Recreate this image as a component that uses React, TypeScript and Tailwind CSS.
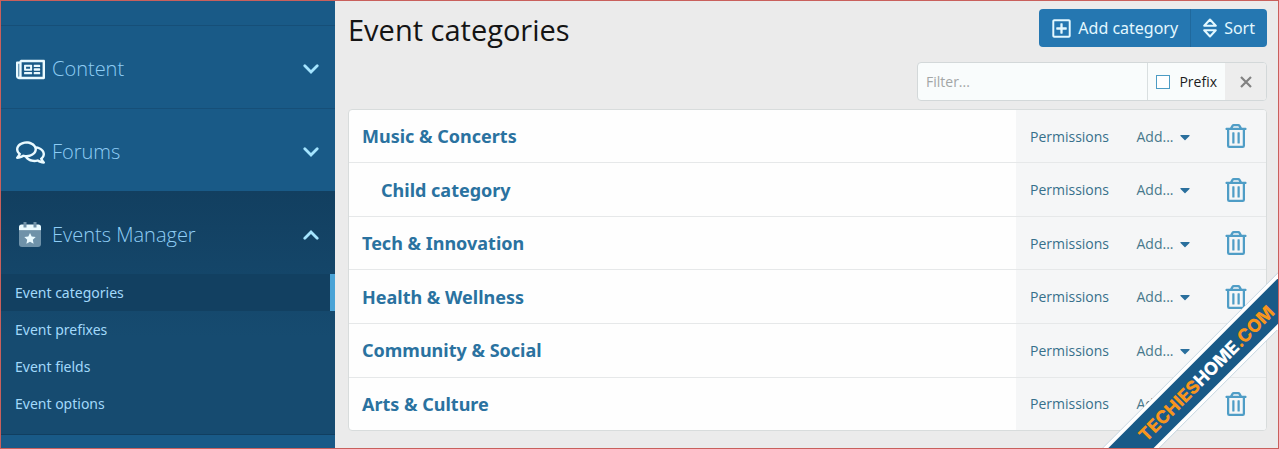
import { useState } from "react";
import type { ReactNode } from "react";
import { FaCaretDown, FaRegComments, FaRegNewspaper, FaRegPlusSquare, FaRegTrashAlt } from "react-icons/fa";

type Category = {
  title: string;
  depth: number;
};

const categories: Category[] = [
  { title: "Music & Concerts", depth: 0 },
  { title: "Child category", depth: 1 },
  { title: "Tech & Innovation", depth: 0 },
  { title: "Health & Wellness", depth: 0 },
  { title: "Community & Social", depth: 0 },
  { title: "Arts & Culture", depth: 0 },
];

const eventLinks = ["Event categories", "Event prefixes", "Event fields", "Event options"];

export default function App() {
  const [filter, setFilter] = useState("");
  const [prefix, setPrefix] = useState(false);

  return (
    <div className="relative flex min-h-screen overflow-hidden border border-[#c9605c] bg-[#ebebeb] font-['Open_Sans','Noto_Sans',sans-serif]">
      <Sidebar />

      <main className="min-w-0 flex-1 pr-[11px] pl-[13px]">
        <div className="flex items-start justify-between pt-2">
          <h1 className="text-[29px] leading-[42px] text-[#141414]">Event categories</h1>
          <div className="flex h-[38px] overflow-hidden rounded-[4px] bg-[#2577b1] font-['Noto_Sans',sans-serif] text-base text-[#e3f8ff]">
            <button type="button" className="flex items-center gap-[6px] border-r border-[#20699d] px-3">
              <FaRegPlusSquare className="size-[21px]" />
              Add category
            </button>
            <button type="button" className="flex items-center gap-[7px] px-3">
              <SortIcon />
              Sort
            </button>
          </div>
        </div>

        <form className="mt-[11px] ml-auto flex h-[39px] w-[350px] overflow-hidden rounded-[4px] border border-[#d3d8d9] bg-[#f9fcfc] text-sm" onSubmit={(event) => event.preventDefault()}>
          <input aria-label="Filter" value={filter} onChange={(event) => setFilter(event.target.value)} placeholder="Filter..." className="min-w-0 flex-1 px-2 outline-none placeholder:text-[#a3a6a6]" />
          <label className="flex items-center gap-[9px] border-l border-[#d9dfe0] px-2 text-[#1c1c1c]">
            <input type="checkbox" checked={prefix} onChange={(event) => setPrefix(event.target.checked)} className="size-[14px] appearance-none border border-[#4d9cc4] bg-white checked:bg-[#4d9cc4]" />
            Prefix
          </label>
          <button type="button" aria-label="Clear filter" onClick={() => setFilter("")} className="flex w-[41px] items-center justify-center bg-[#ededed] text-[#828282]">
            <svg viewBox="0 0 12 12" className="size-3" fill="none" stroke="currentColor" strokeWidth="2.2">
              <path d="M1 1l10 10M11 1L1 11" />
            </svg>
          </button>
        </form>

        <div className="mt-2 overflow-hidden rounded-[4px] border border-[#d8dcdc] bg-[#fefefe]">
          <table className="h-[320px] w-full border-collapse">
            <tbody>
              {categories.map((category) => <CategoryRow key={category.title} category={category} />)}
            </tbody>
          </table>
        </div>
      </main>

      <Ribbon />
    </div>
  );
}

function Sidebar() {
  return (
    <nav className="w-[334px] shrink-0 bg-[#195a87] text-[#8fcdf5]">
      <div className="h-6" />
      <SectionHeader icon={<FaRegNewspaper className="size-[29px]" />} label="Content" />
      <SectionHeader icon={<FaRegComments className="size-[29px]" />} label="Forums" />
      <div className="border-b border-[#113f60] bg-[#154a70] bg-linear-to-b from-[#123f60] to-[#164b70] to-60% pb-3">
        <SectionHeader icon={<CalendarIcon />} label="Events Manager" open />
        <ul>
          {eventLinks.map((label, index) => (
            <li key={label}>
              <a href="#" className={`flex h-[37px] items-center pl-[14px] font-['Noto_Sans',sans-serif] text-sm text-[#a2d9fb] ${index === 0 ? "border-r-[5px] border-[#4aa3d6] bg-[#124061]" : ""}`}>
                {label}
              </a>
            </li>
          ))}
        </ul>
      </div>
    </nav>
  );
}

function SectionHeader({ icon, label, open = false }: { icon: ReactNode; label: string; open?: boolean }) {
  return (
    <button type="button" aria-expanded={open} className={`flex h-[83px] w-full items-center pt-1 pr-4 pl-[14px] ${open ? "" : "border-t border-[#164f78]"}`}>
      <span className="flex w-[30px] justify-center text-[#eafaff]">{icon}</span>
      <span className="ml-[7px] flex-1 text-left text-[20px] leading-7 font-light">{label}</span>
      <svg viewBox="0 0 16 10" className={`h-[10px] w-4 text-[#a5e5ff] ${open ? "rotate-180" : ""}`} fill="none" stroke="currentColor" strokeWidth="2.8" strokeLinecap="round">
        <path d="M1.8 1.8L8 8l6.2-6.2" />
      </svg>
    </button>
  );
}

function CategoryRow({ category }: { category: Category }) {
  return (
    <tr className="border-b border-[#e6e8e9] last:border-b-0">
      <td className={`pt-px font-['Noto_Sans',sans-serif] text-[18px] font-bold text-[#2a72a0] ${category.depth ? "pl-8" : "pl-[13px]"}`}>
        <a href="#">{category.title}</a>
      </td>
      <td className="w-[107px] bg-[#f5f6f7] pt-px text-center text-sm text-[#37708b]">
        <a href="#">Permissions</a>
      </td>
      <td className="w-[83px] bg-[#f5f6f7] pt-px text-sm text-[#47798c]">
        <button type="button" className="mx-auto flex items-center gap-[3px]">
          Add...
          <FaCaretDown className="size-4 text-[#2a6f9d]" />
        </button>
      </td>
      <td className="w-[60px] bg-[#f5f6f7]">
        <button type="button" aria-label={`Delete ${category.title}`} className="mx-auto block text-[#4f9dc6]">
          <FaRegTrashAlt className="size-6" />
        </button>
      </td>
    </tr>
  );
}

function SortIcon() {
  return (
    <svg viewBox="0 0 14 20" className="h-5 w-[14px]" fill="none" stroke="currentColor" strokeWidth="2" strokeLinejoin="round">
      <path d="M7 1.500L12.800 7.800H1.200zM7 18.500L1.200 12.200h11.600z" />
    </svg>
  );
}

function CalendarIcon() {
  return (
    <svg viewBox="0 0 24 27" className="h-[27px] w-6" fill="none">
      <path d="M1 10h22v13a3 3 0 0 1-3 3H4a3 3 0 0 1-3-3z" fill="#6f92a9" />
      <path d="M1 9.500V6a2.500 2.500 0 0 1 2.500-2.500h17A2.500 2.500 0 0 1 23 6v3.500z" fill="#eafaff" />
      <path d="M5.500 1h3v5.500h-3zM15.500 1h3v5.500h-3z" fill="#6f92a9" />
      <path d="M12 12l1.700 3.600 4 .5-2.900 2.700.8 4-3.600-2-3.600 2 .8-4-2.900-2.700 4-.5z" fill="#eafaff" />
    </svg>
  );
}

function Ribbon() {
  return (
    <div className="absolute right-[-78px] bottom-[55px] flex h-10 w-[300px] -rotate-45 items-center justify-center border-y-4 border-white bg-[#195a87] font-[Inter,sans-serif] text-[18px] font-extrabold text-[#f7951d]">
      TECHIES<span className="text-white">HOME</span>.COM
    </div>
  );
}
